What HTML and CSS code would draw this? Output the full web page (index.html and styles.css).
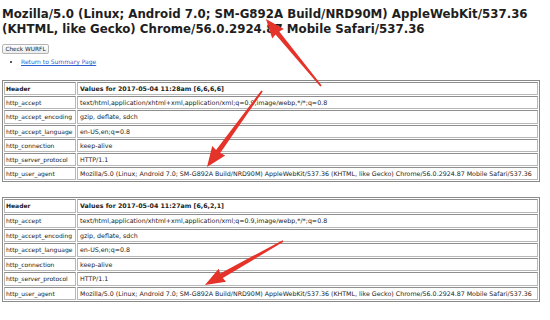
FILE: index.html
```html
<!DOCTYPE html>
<html>
<head>
<meta charset="utf-8">
<link rel="stylesheet" href="styles.css">
</head>
<body>
<div class="page">
  <h1 class="ua">Mozilla/5.0 (Linux; Android 7.0; SM-G892A Build/NRD90M) AppleWebKit/537.36 (KHTML, like Gecko) Chrome/56.0.2924.87 Mobile Safari/537.36</h1>
  <button class="btn">Check WURFL</button>
  <ul class="links"><li><a href="#">Return to Summary Page</a></li></ul>

  <table class="hdrs">
    <tr><th class="c1">Header</th><th>Values for 2017-05-04 11:28am [6,6,6,6]</th></tr>
    <tr><td class="c1">http_accept</td><td>text/html,application/xhtml+xml,application/xml;q=0.9,image/webp,*/*;q=0.8</td></tr>
    <tr><td class="c1">http_accept_encoding</td><td>gzip, deflate, sdch</td></tr>
    <tr><td class="c1">http_accept_language</td><td>en-US,en;q=0.8</td></tr>
    <tr><td class="c1">http_connection</td><td>keep-alive</td></tr>
    <tr><td class="c1">http_server_protocol</td><td>HTTP/1.1</td></tr>
    <tr><td class="c1">http_user_agent</td><td>Mozilla/5.0 (Linux; Android 7.0; SM-G892A Build/NRD90M) AppleWebKit/537.36 (KHTML, like Gecko) Chrome/56.0.2924.87 Mobile Safari/537.36</td></tr>
  </table>

  <table class="hdrs second">
    <tr><th class="c1">Header</th><th>Values for 2017-05-04 11:27am [6,6,2,1]</th></tr>
    <tr><td class="c1">http_accept</td><td>text/html,application/xhtml+xml,application/xml;q=0.9,image/webp,*/*;q=0.8</td></tr>
    <tr><td class="c1">http_accept_encoding</td><td>gzip, deflate, sdch</td></tr>
    <tr><td class="c1">http_accept_language</td><td>en-US,en;q=0.8</td></tr>
    <tr><td class="c1">http_connection</td><td>keep-alive</td></tr>
    <tr><td class="c1">http_server_protocol</td><td>HTTP/1.1</td></tr>
    <tr><td class="c1">http_user_agent</td><td>Mozilla/5.0 (Linux; Android 7.0; SM-G892A Build/NRD90M) AppleWebKit/537.36 (KHTML, like Gecko) Chrome/56.0.2924.87 Mobile Safari/537.36</td></tr>
  </table>
</div>

<svg class="arrows" width="550" height="320" viewBox="0 0 550 320">
  <g fill="#e5332a">
    <polygon transform="translate(321 86) rotate(-129.4)" points="0,-0.9 68.7,-2.4 67.7,-7.5 86.7,0 67.7,7.5 68.7,2.4 0,0.9"/>
    <polygon transform="translate(262 91) rotate(125.9)" points="0,-0.9 74.8,-2.6 73.8,-8 93.8,0 73.8,8 74.8,2.6 0,0.9"/>
    <polygon transform="translate(283 241) rotate(150.6)" points="0,-0.9 70.6,-2.6 69.6,-7.5 89.6,0 69.6,7.5 70.6,2.6 0,0.9"/>
  </g>
</svg>
</body>
</html>
```

FILE: styles.css
```css
html, body {
  margin: 0;
  padding: 0;
  background: #ffffff;
}

body {
  width: 550px;
  height: 320px;
  overflow: hidden;
  position: relative;
  font-family: "DejaVu Sans", Verdana, sans-serif;
  color: #222;
}

.page {
  padding: 7px 2px 0 2px;
}

.ua {
  margin: 0;
  font-family: "DejaVu Sans", Verdana, sans-serif;
  font-weight: bold;
  font-size: 11.8px;
  line-height: 15px;
  color: #1e1e1e;
  width: 540px;
}

.btn {
  display: block;
  margin: 7px 0 0 0;
  width: 47px;
  height: 10px;
  padding: 0;
  font-family: "DejaVu Sans", Verdana, sans-serif;
  font-size: 5.8px;
  line-height: 8px;
  color: #222;
  background: linear-gradient(#ffffff, #ececec);
  border: 1px solid #b5b5b5;
  border-radius: 2px;
}

.links {
  margin: 3px 0 0 0;
  padding: 0 0 0 19px;
  font-size: 6px;
  line-height: 9px;
}

.links a {
  color: #2f5fcf;
  text-decoration: underline;
}

.hdrs {
  margin-top: 14px;
  width: 538px;
  border-collapse: separate;
  border-spacing: 1px;
  border: 1px solid #8a8a8a;
  font-size: 6.3px;
  line-height: 10px;
}

.second {
  margin-top: 15px;
}

.hdrs th,
.hdrs td {
  border: 1px solid #b8b8b8;
  border-top-color: #8e8e8e;
  padding: 1px 2px 0.2px 2px;
  text-align: left;
  white-space: nowrap;
  color: #222;
}

.second th,
.second td {
  padding-bottom: 0.6px;
}

.hdrs th {
  font-weight: bold;
}

.hdrs .c1 {
  width: 67px;
  padding-left: 1px;
  font-size: 6px;
}

.arrows {
  position: absolute;
  left: 0;
  top: 0;
  pointer-events: none;
}
```
